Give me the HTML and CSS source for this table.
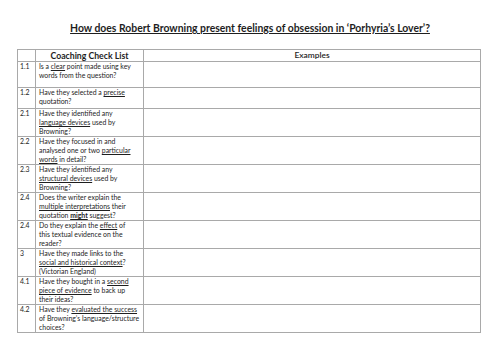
FILE: index.html
```html
<!DOCTYPE html>
<html>
<head>
<meta charset="utf-8">
<link rel="stylesheet" href="styles.css">
</head>
<body>
<div class="page">
  <h1 class="title">How does Robert Browning present feelings of obsession in ‘Porhyria’s Lover’?</h1>
  <table class="sheet">
    <colgroup>
      <col class="c-num">
      <col class="c-check">
      <col class="c-ex">
    </colgroup>
    <thead>
      <tr class="head">
        <th></th>
        <th class="h-check">Coaching Check List</th>
        <th class="h-ex">Examples</th>
      </tr>
    </thead>
    <tbody>
      <tr class="r2 extra">
        <td class="num">1.1</td>
        <td class="q">Is a <u>clear</u> point made using key<br>words from the question?</td>
        <td></td>
      </tr>
      <tr class="r2">
        <td class="num">1.2</td>
        <td class="q">Have they selected a <u>precise</u><br>quotation?</td>
        <td></td>
      </tr>
      <tr class="r3">
        <td class="num">2.1</td>
        <td class="q">Have they identified any<br><u>language devices</u> used by<br>Browning?</td>
        <td></td>
      </tr>
      <tr class="r3">
        <td class="num">2.2</td>
        <td class="q">Have they focused in and<br>analysed one or two <u>particular</u><br><u>words</u> in detail?</td>
        <td></td>
      </tr>
      <tr class="r3">
        <td class="num">2.3</td>
        <td class="q">Have they identified any<br><u>structural devices</u> used by<br>Browning?</td>
        <td></td>
      </tr>
      <tr class="r3">
        <td class="num">2.4</td>
        <td class="q">Does the writer explain the<br><u>multiple interpretations</u> their<br>quotation <b><u>might</u></b> suggest?</td>
        <td></td>
      </tr>
      <tr class="r3">
        <td class="num">2.4</td>
        <td class="q">Do they explain the <u>effect</u> of<br>this textual evidence on the<br>reader?</td>
        <td></td>
      </tr>
      <tr class="r3">
        <td class="num">3</td>
        <td class="q">Have they made links to the<br><u>social and historical context</u>?<br>(Victorian England)</td>
        <td></td>
      </tr>
      <tr class="r3">
        <td class="num">4.1</td>
        <td class="q">Have they bought in a <u>second</u><br><u>piece of evidence</u> to back up<br>their ideas?</td>
        <td></td>
      </tr>
      <tr class="r3">
        <td class="num">4.2</td>
        <td class="q">Have they <u>evaluated the success</u><br>of Browning’s language/structure<br>choices?</td>
        <td></td>
      </tr>
    </tbody>
  </table>
</div>
</body>
</html>
```
FILE: styles.css
```css
html, body {
  margin: 0;
  padding: 0;
  background: #ffffff;
}

body {
  width: 500px;
  height: 354px;
  overflow: hidden;
  font-family: Lato, "Open Sans", sans-serif;
  color: #1e1e1e;
}

.page {
  padding: 22px 20px 0 17px;
}

.title {
  margin: 0 0 14px 0;
  font-size: 10.4px;
  line-height: 13px;
  font-weight: 700;
  text-align: center;
  text-decoration: underline;
  text-underline-offset: 1px;
  padding-left: 3px;
  white-space: nowrap;
}

.sheet {
  border-collapse: collapse;
  width: 463px;
  table-layout: fixed;
}

.c-num { width: 18px; }
.c-check { width: 108px; }
.c-ex { width: 337px; }

.sheet th,
.sheet td {
  border: 1px solid #a9a9a9;
  padding: 0;
  vertical-align: top;
  white-space: nowrap;
}

.head th {
  height: 11px;
  font-size: 8.7px;
  line-height: 11px;
  font-weight: 700;
  text-align: center;
}

.head .h-ex {
  font-weight: 600;
  font-size: 8.4px;
}

.sheet td {
  font-size: 6.9px;
  line-height: 9px;
}

.num {
  padding: 0 0 0 2px !important;
}

.q {
  padding: 0 0 0 3px !important;
}

.r2 td { height: 20px; }
.r3 td { height: 27px; }
.extra td { height: 25px; }

.q u {
  text-underline-offset: 1px;
}
```
